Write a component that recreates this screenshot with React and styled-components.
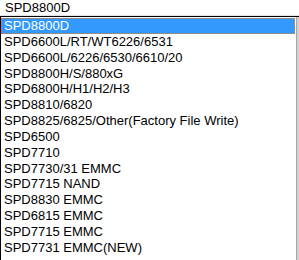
import React from "react";
import styled, { createGlobalStyle } from "styled-components";

const GlobalStyle = createGlobalStyle`
  html, body {
    margin: 0;
    padding: 0;
    background: #ffffff;
  }
  body {
    font-family: "Liberation Sans", Arial, sans-serif;
    font-size: 13px;
    color: #000;
    overflow: hidden;
  }
`;

const models = [
  "SPD8800D",
  "SPD6600L/RT/WT6226/6531",
  "SPD6600L/6226/6530/6610/20",
  "SPD8800H/S/880xG",
  "SPD6800H/H1/H2/H3",
  "SPD8810/6820",
  "SPD8825/6825/Other(Factory File Write)",
  "SPD6500",
  "SPD7710",
  "SPD7730/31 EMMC",
  "SPD7715 NAND",
  "SPD8830 EMMC",
  "SPD6815 EMMC",
  "SPD7715 EMMC",
  "SPD7731 EMMC(NEW)",
];

const Combo = styled.div`
  width: 299px;
  height: 260px;
  display: flex;
  flex-direction: column;
  overflow: hidden;
`;

const Field = styled.div`
  height: 15px;
  line-height: 15px;
  padding-left: 5px;
  background: #fff;
  border-bottom: 1px solid #e3e3e3;
  white-space: nowrap;
`;

const Dropdown = styled.div`
  flex: 1;
  display: flex;
  border-top: 1px solid #000;
  border-left: 1px solid #000;
  min-height: 0;
`;

const List = styled.ul`
  flex: 1;
  margin: 0;
  padding: 1px 0 0;
  list-style: none;
`;

const Item = styled.li`
  height: 15.85px;
  line-height: 16.5px;
  padding-left: 3px;
  white-space: nowrap;
  box-sizing: border-box;
  background: ${(p) => (p.$selected ? "#3399ff" : "transparent")};
  color: ${(p) => (p.$selected ? "#fff" : "#000")};
  outline: ${(p) => (p.$selected ? "1px dotted #e8801a" : "none")};
  outline-offset: -1px;
`;

const Scrollbar = styled.div`
  width: 2px;
  margin-left: 1px;
  background: #d0d0d0;
  border-left: 1px solid #a8a8a8;
`;

export default function App() {
  return (
    <>
      <GlobalStyle />
      <Combo>
        <Field>SPD8800D</Field>
        <Dropdown>
          <List>
            {models.map((m, i) => (
              <Item key={m + i} $selected={i === 0}>
                {m}
              </Item>
            ))}
          </List>
          <Scrollbar />
        </Dropdown>
      </Combo>
    </>
  );
}
